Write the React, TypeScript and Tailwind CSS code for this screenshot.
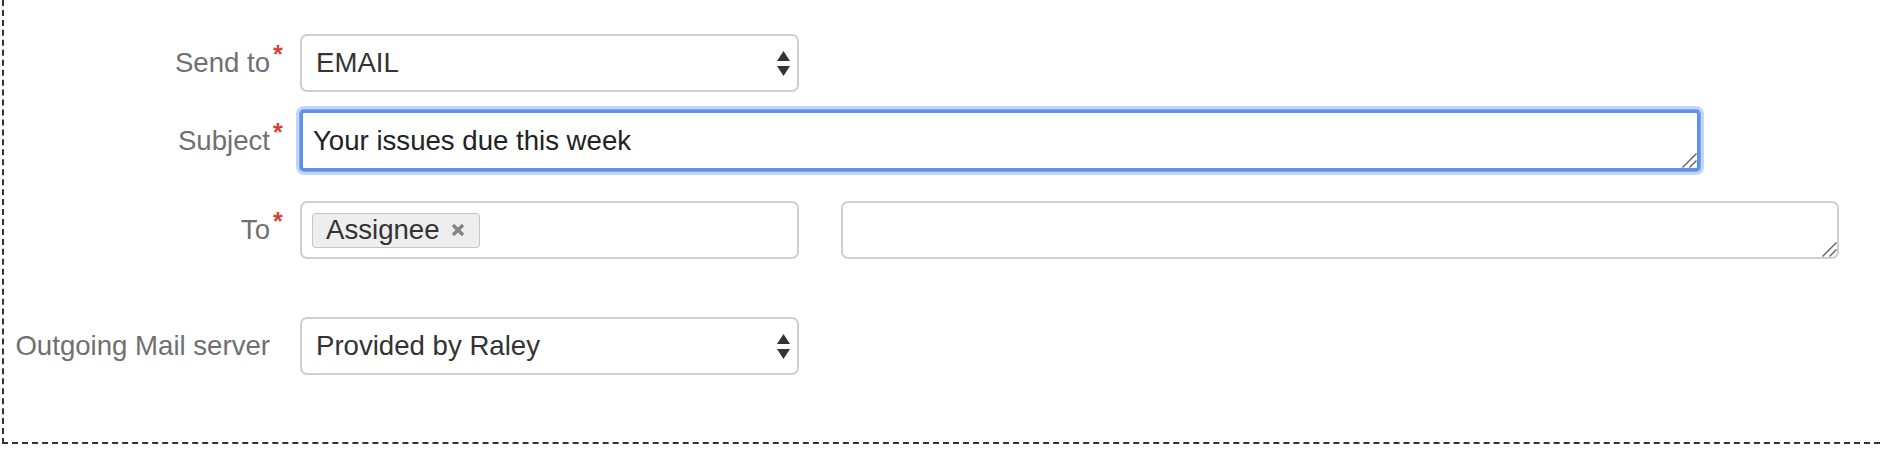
const FONT = "font-['Liberation_Sans',Arial,Helvetica,sans-serif]";

function Grip() {
  return (
    <svg className="absolute right-0 bottom-0" width="15" height="15" viewBox="0 0 15 15">
      <line x1="14.5" y1="0.5" x2="0.5" y2="14.5" stroke="#5a5a5a" strokeWidth="1.3" />
      <line x1="14.5" y1="7.5" x2="7.5" y2="14.5" stroke="#5a5a5a" strokeWidth="1.3" />
    </svg>
  );
}

function SelectArrows() {
  return (
    <svg width="13" height="25" viewBox="0 0 13 25" className="shrink-0">
      <polygon points="6.5,0 13,10 0,10" fill="#333" />
      <polygon points="0,15 13,15 6.5,25" fill="#333" />
    </svg>
  );
}

function Label({ text, required }: { text: string; required?: boolean }) {
  return (
    <div className="w-[266px] shrink-0 text-right">
      <span className="relative leading-none text-[#707070]">
        {text}
        {required && (
          <span className="absolute left-full -top-[5px] ml-[3px] text-[25px] font-bold leading-none text-[#d04437]">*</span>
        )}
      </span>
    </div>
  );
}

function Select({ value }: { value: string }) {
  return (
    <div className="flex h-[58px] w-[499px] items-center justify-between rounded-[7px] border-2 border-[#cfcfcf] bg-white pl-[14px] pr-[7px] text-[#333]">
      <span>{value}</span>
      <SelectArrows />
    </div>
  );
}

export default function App() {
  return (
    <div className={`${FONT} h-[450px] w-full bg-white text-[27.6px]`}>
      <div className="ml-[2px] flex flex-col border-b-2 border-l-2 border-dashed border-[#333] pt-[34px] pb-[67px]">
        {/* Send to */}
        <div className="flex items-center gap-[30px]">
          <Label text="Send to" required />
          <Select value="EMAIL" />
        </div>

        {/* Subject */}
        <div className="mt-[18px] flex items-center gap-[30px]">
          <Label text="Subject" required />
          <div className="relative flex h-[61px] w-[1400px] items-center rounded-[4px] border-[3px] border-[#5f91e9] bg-white pl-[10px] text-[#222] shadow-[0_0_0_1px_#7ea6ee,0_0_0_4px_#c3d6f8]">
            <span>Your issues due this week</span>
            <Grip />
          </div>
        </div>

        {/* To */}
        <div className="mt-[30px] flex items-center gap-[30px]">
          <Label text="To" required />
          <div className="flex h-[58px] w-[499px] items-center rounded-[7px] border-2 border-[#cfcfcf] bg-white pl-[10px]">
            <div className="flex h-[35px] items-center gap-[11px] rounded-[4px] border border-[#c6c6c6] bg-[#eeeeee] pl-[13px] pr-[14px] text-[#333]">
              <span>Assignee</span>
              <svg width="14" height="14" viewBox="0 0 14 14">
                <line x1="2" y1="2" x2="12" y2="12" stroke="#858585" strokeWidth="3.4" />
                <line x1="12" y1="2" x2="2" y2="12" stroke="#858585" strokeWidth="3.4" />
              </svg>
            </div>
          </div>
          <div className="relative ml-[12px] h-[58px] w-[998px] rounded-[7px] border-2 border-[#cfcfcf] bg-white">
            <Grip />
          </div>
        </div>

        {/* Outgoing mail server */}
        <div className="mt-[58px] flex items-center gap-[30px]">
          <Label text="Outgoing Mail server" />
          <Select value="Provided by Raley" />
        </div>
      </div>
    </div>
  );
}
